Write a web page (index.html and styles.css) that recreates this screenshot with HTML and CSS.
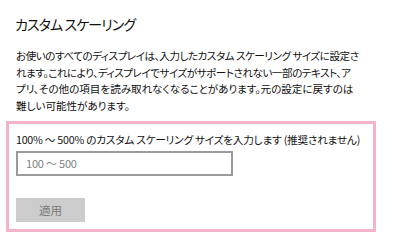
FILE: index.html
```html
<!DOCTYPE html>
<html lang="ja">
<head>
<meta charset="utf-8">
<link rel="stylesheet" href="styles.css">
</head>
<body>
<div class="page">
  <h1 class="title">カスタム スケーリング</h1>
  <p class="desc"><span class="line tight">お使いのすべてのディスプレイは、入力したカスタム スケーリング サイズに設定さ</span><span class="line tight">れます。これにより、ディスプレイでサイズがサポートされない一部のテキスト、ア</span><span class="line">プリ、その他の項目を読み取れなくなることがあります。元の設定に戻すのは</span><span class="line">難しい可能性があります。</span></p>
  <div class="box">
    <div class="label">100% ～ 500% のカスタム スケーリング サイズを入力します (推奨されません)</div>
    <div class="input"><span class="placeholder">100 ～ 500</span></div>
    <div class="button">適用</div>
  </div>
</div>
</body>
</html>
```
FILE: styles.css
```css
html, body {
  margin: 0;
  padding: 0;
  background: #ffffff;
}
body {
  font-family: "Noto Sans CJK JP", "Noto Sans", sans-serif;
  font-feature-settings: "palt";
  color: #000000;
  width: 400px;
  height: 243px;
  overflow: hidden;
}
.page {
  display: flex;
  flex-direction: column;
  padding-top: 14px;
}
.title {
  margin: 0 0 0 15px;
  font-size: 14px;
  font-weight: normal;
  line-height: 20px;
  color: #111;
  letter-spacing: -0.9px;
}
.desc {
  margin: 14px 0 0 16px;
  font-size: 10.6px;
  line-height: 16.7px;
  white-space: nowrap;
  color: #111;
}
.line {
  display: block;
  letter-spacing: -0.05px;
}
.line.tight {
  letter-spacing: -0.5px;
}
.box {
  box-sizing: border-box;
  margin: 6px 0 0 6px;
  width: 370px;
  height: 111px;
  border: 3px solid #f4b3cb;
  padding: 8px 7px 0 7px;
  display: flex;
  flex-direction: column;
}
.label {
  font-size: 10.7px;
  letter-spacing: -0.25px;
  line-height: 16px;
  color: #111;
  white-space: nowrap;
}
.input {
  box-sizing: border-box;
  margin-top: 3px;
  width: 217px;
  height: 25px;
  border: 2px solid #9a9a9a;
  display: flex;
  align-items: center;
  padding-left: 8px;
}
.placeholder {
  font-size: 11px;
  letter-spacing: -0.2px;
  color: #808080;
}
.button {
  margin-top: 22px;
  width: 69px;
  height: 24px;
  background: #cccccc;
  color: #7a7a7a;
  font-size: 11.5px;
  display: flex;
  align-items: center;
  justify-content: center;
}
```
